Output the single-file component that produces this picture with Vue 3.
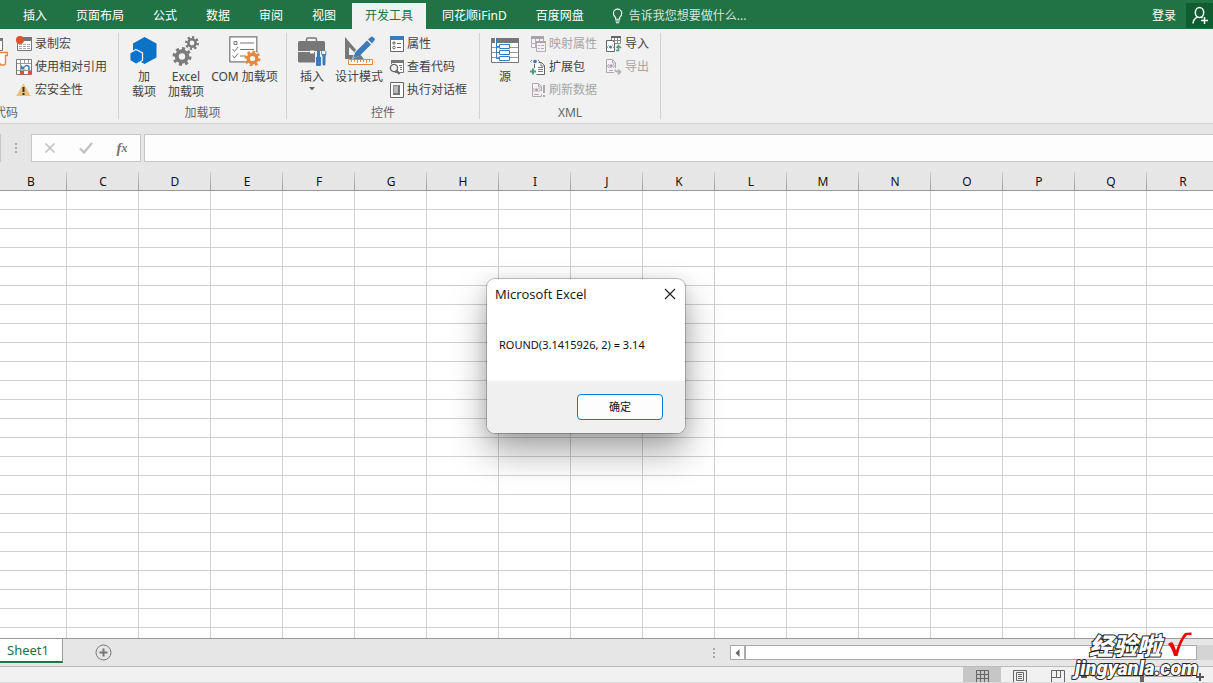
<script setup>
import { ref } from 'vue'

const tabs = ['插入', '页面布局', '公式', '数据', '审阅', '视图', '开发工具', '同花顺iFinD', '百度网盘']
const activeTab = ref('开发工具')
const columns = 'BCDEFGHIJKLMNOPQR'.split('')
const rowCount = 24
const formula = ref('')
const zoom = ref(50)
</script>

<template>
  <div class="app">
    <header class="tabbar">
      <nav class="tabs">
        <button v-for="t in tabs" :key="t" class="tab" :class="{ active: t === activeTab }" @click="activeTab = t">{{ t }}</button>
      </nav>
      <button class="tell">
        <svg width="12" height="16" viewBox="0 0 12 16" fill="none" stroke="#fff" stroke-width="1.1">
          <path d="M3.6 11.2V9.6C2.2 8.4 1.4 7 1.4 5.3a4.2 4.2 0 0 1 8.4 0c0 1.700-.8 3.100-2.200 4.300v1.600z" />
          <path d="M3.400 13h4.400M4 14.800h3.200" />
        </svg>
        <span>告诉我您想要做什么...</span>
      </button>
      <button class="login">登录</button>
      <button class="share" aria-label="共享">
        <svg width="18" height="20" viewBox="0 0 18 20" fill="none" stroke="#fff" stroke-width="1.5">
          <ellipse cx="8.500" cy="6.500" rx="4.200" ry="5" />
          <path d="M2 17.500c.3-3.500 1.800-5.500 4.700-6.400M10 11l1.500 1M10 14.500h7M13.500 11v7" />
        </svg>
      </button>
    </header>

    <section class="ribbon">
      <div class="group g-code">
        <div class="body">
          <svg class="macro" width="8" height="30" viewBox="0 0 8 30">
            <path d="M0 1.500h2.500v12H0" fill="#fff" stroke="#777" />
            <path d="M0 1h3v3H0z" fill="#777" />
            <path d="M0 15.500h7.500v3H5.500v7.500q0 2-2 2H1.500q-1.500 0-1.500-2" fill="#fff" stroke="#e8873a" stroke-width="1.400" />
          </svg>
          <div class="stack">
            <button class="small">
              <svg width="16" height="16" viewBox="0 0 16 16">
                <path d="M1.500 3.500h14v11h-14z" fill="#fff" stroke="#777" />
                <path d="M6 1h10v4H6z" fill="#777" />
                <path d="M3 8.500h11M3 10.500h11M3 12.500h11" stroke="#aaa" stroke-dasharray="3 1" />
                <circle cx="4" cy="4" r="4" fill="#d9532c" />
              </svg>录制宏</button>
            <button class="small">
              <svg width="16" height="16" viewBox="0 0 16 16">
                <path d="M.5.500h15v15H.5z" fill="#fff" stroke="#777" />
                <path d="M1 4.500h14M1 11.500h14M4.500 1v14M8.500 1v3M12.500 1v3" stroke="#999" />
                <path d="M4 12h4v3.500H4zM12 12h3v3.500h-3z" fill="#d9532c" />
                <path d="M5 5h10v6H5z" fill="#fff" />
                <path d="M7 9q3-4 6-1.500V11" fill="none" stroke="#3d7ab8" stroke-width="1.500" />
                <path d="M5 6v4.500h4.500z" fill="#3d7ab8" />
              </svg>使用相对引用</button>
            <button class="small">
              <svg width="16" height="16" viewBox="0 0 16 16">
                <path d="M7.500 1.500 14.800 14H.2z" fill="#ebc07c" />
                <path d="M7.500 5v5M7.500 11v2" stroke="#333" stroke-width="2" />
              </svg>宏安全性</button>
          </div>
        </div>
        <div class="caption">代码</div>
      </div>

      <div class="group g-addins">
        <div class="body">
          <button class="big w38">
            <svg width="28" height="30" viewBox="0 0 28 30">
              <path d="M14.500 1 26.500 7.500V21.500L14.500 28 3 21.500V7.500z" fill="#0a72c7" />
              <path d="M6 13.500 12.500 17v7.500L6 28.300-.2 24.500V17z" fill="#0a72c7" stroke="#f0f0f0" stroke-width="1.300" />
            </svg>
            <span>加<br>载项</span>
          </button>
          <button class="big w42">
            <svg width="28" height="30" viewBox="0 0 28 30" fill="none" stroke="#7b7b7b">
              <circle cx="10" cy="20.500" r="5.200" stroke-width="4" />
              <circle cx="10" cy="20.500" r="8" stroke-width="3" pathLength="16" stroke-dasharray="1 1" />
              <circle cx="20" cy="7" r="3.700" stroke-width="2.600" />
              <circle cx="20" cy="7" r="5.800" stroke-width="2.400" pathLength="16" stroke-dasharray="1 1" />
            </svg>
            <span>Excel<br>加载项</span>
          </button>
          <button class="big w71">
            <svg width="32" height="30" viewBox="0 0 32 30" fill="none">
              <path d="M.8.800h27v25H.8z" fill="#fff" stroke="#777" stroke-width="1.200" />
              <path d="M5 5.500h3v3H5zM11 7h14M11 13.500h14M11 20h6" stroke="#777" />
              <path d="m3.500 13 2 2.500 3.500-4.500M3.500 19.500l2 2.500 3.500-4.500" stroke="#777" />
              <circle cx="23.500" cy="22.500" r="7.500" fill="#f6f6f6" />
              <circle cx="23.500" cy="22.500" r="4.300" stroke="#e8873a" stroke-width="3.400" />
              <circle cx="23.500" cy="22.500" r="6.700" stroke="#e8873a" stroke-width="2.600" pathLength="16" stroke-dasharray="1 1" />
            </svg>
            <span>COM 加载项</span>
          </button>
        </div>
        <div class="caption">加载项</div>
      </div>

      <div class="group g-controls">
        <div class="body">
          <button class="big w34">
            <svg width="30" height="30" viewBox="0 0 30 30">
              <path d="M9.500 6V3.500q0-1.500 1.500-1.500h7q1.500 0 1.500 1.500V6" fill="none" stroke="#777" stroke-width="1.500" />
              <path d="M2.500 5h24q1.500 0 1.500 1.500V15H1V6.500Q1 5 2.500 5zM1 16h27v10.500H2.500Q1 26.500 1 25z" fill="#777" />
              <path d="M13 14.500h4v3h-4z" fill="#fff" />
              <path d="M18 15h12v15H18z" fill="#f0f0f0" />
              <path d="M20 15h3v6h1v8q0 1-1 1h-3q-1 0-1-1v-8h1zM25 14v4h3.500v-4q2 3 0 6v8q0 1.500-1.500 1.500t-1.500-1.500v-8q-2.500-3-.500-6z" fill="#3d7ab8" />
            </svg>
            <span>插入</span>
            <svg class="caret" width="6" height="4" viewBox="0 0 6 4"><path d="M0 0h6L3 3.500z" fill="#666" /></svg>
          </button>
          <button class="big w48">
            <svg width="32" height="30" viewBox="0 0 32 30">
              <path d="M2 1v22h19zM6 11l8 8H6z" fill="#777" fill-rule="evenodd" />
              <path d="M9 23 12 15 27 0l5 5L16 20z" fill="#f0f0f0" />
              <path d="m10 22 2.500-6L24 4.500 28 8.500 16.500 20zM25 3.500 28 .8q1-.8 2 .2l1.500 1.500q.8 1 0 1.700L29 7.500z" fill="#3d7ab8" />
              <path d="M5.500 23.500h24v5h-24z" fill="#fff" stroke="#e8873a" />
              <path d="M8.500 24v2M11.500 24v2M14.500 24v3M17.500 24v2M20.500 24v2M23.500 24v3M26.500 24v2" stroke="#e8873a" />
            </svg>
            <span>设计模式</span>
          </button>
          <div class="stack">
            <button class="small">
              <svg width="16" height="16" viewBox="0 0 16 16" fill="none" stroke="#666">
                <path d="M1.500.500h13v15h-13z" fill="#fff" />
                <path d="M1 0h14v4H1z" fill="#3d7ab8" stroke="none" />
                <path d="M4 6h2v2H4zM8 7.500h4M8 11.500h4" /><circle cx="5" cy="11.500" r="1.300" />
              </svg>属性</button>
            <button class="small">
              <svg width="16" height="16" viewBox="0 0 16 16" fill="none" stroke="#777">
                <path d="M2.500 1.500h12v12h-12z" fill="#fff" />
                <path d="M2 1h13v3H2z" fill="#777" stroke="none" />
                <path d="M10 6.500h3M11 8.500h2M11 10.500h2" />
                <path d="M0 5h6v10H0z" fill="#f0f0f0" stroke="none" />
                <circle cx="5" cy="9" r="3.600" fill="#f0f0f0" stroke="#666" stroke-width="1.400" />
                <path d="m7.500 11.500 3 3.500" stroke="#666" stroke-width="2" />
              </svg>查看代码</button>
            <button class="small">
              <svg width="16" height="16" viewBox="0 0 16 16" fill="none">
                <path d="M1.500.500h13v15h-13z" fill="#fff" stroke="#666" />
                <path d="M5 4h4v8H5z" fill="#bbb" /><path d="M9 3h2v10H4v-2h5z" fill="#777" />
                <path d="M4.500 3v9M4 3.500h6" stroke="#888" />
              </svg>执行对话框</button>
          </div>
        </div>
        <div class="caption">控件</div>
      </div>

      <div class="group g-xml">
        <div class="body">
          <button class="big w32">
            <svg width="30" height="28" viewBox="0 0 30 28" fill="none">
              <path d="M1.500 2.500h27v24h-27z" fill="#fff" stroke="#777" />
              <path d="M1 2h28v5H1z" fill="#777" />
              <path d="M2 11.500h26M2 16.500h26M2 21.500h26" stroke="#999" />
              <path d="M5 2h2v5H5z" fill="#fff" />
              <path d="M6.500 2v20.500h4M6 10.500h4M6 16.500h4" stroke="#3d7ab8" />
              <path d="M9.500 8.500h10v4h-10zM9.500 14.500h10v4h-10zM9.500 20.500h10v4h-10z" fill="#fff" stroke="#3d7ab8" />
            </svg>
            <span>源</span>
          </button>
          <div class="stack">
            <button class="small" disabled>
              <svg width="16" height="16" viewBox="0 0 16 16" fill="none" stroke="#b5adb5">
                <path d="M1.500.500h12v11h-12zM5.500 1v10M9.500 1v10M2 7.500h11" fill="#f7f0f7" />
                <path d="M1 0h13v3H1z" fill="#aaa4aa" stroke="none" />
                <path d="M6.500 5.500h9v10h-9z" fill="#f7f0f7" /><path d="M6 5h10v2H6z" fill="#aaa4aa" stroke="none" />
                <path d="M8 9.500h2M11 9.500h3M8 12.500h2M11 12.500h3" />
              </svg>映射属性</button>
            <button class="small">
              <svg width="16" height="16" viewBox="0 0 16 16" fill="none">
                <path d="M4.500 9V3.500h7l3 3v9h-8" fill="#fff" stroke="#666" />
                <path d="M11 3.500v3.500h3.500M8 8.500h5M8 10.500h5M8 12.500h5" stroke="#777" />
                <path d="M1 0h8v5H1z" fill="#f0f0f0" />
                <path d="M2 1 .5 2.500 2 4M8 1l1.500 1.500L8 4" stroke="#555" stroke-dasharray="1 1" />
                <circle cx="5" cy="2.500" r="1.800" fill="#3d7ab8" />
                <path d="M0 12.500h6M3 9.500v6" stroke="#4f9c7c" stroke-width="2" />
              </svg>扩展包</button>
            <button class="small" disabled>
              <svg width="16" height="16" viewBox="0 0 16 16" fill="none" stroke="#b0a8b0">
                <path d="M11.500 12.500v2h-9v-13h6l3 3V9M8.500 2v3h3" fill="#f7f0f7" />
                <path d="m4.500 6-2 2 2 2M8.500 6l2 2-2 2M4 12.500h5" /><circle cx="6.500" cy="8" r="1.300" fill="#aaa" />
                <path d="M14 3v8M14 13v2" stroke-width="2" />
              </svg>刷新数据</button>
          </div>
          <div class="stack">
            <button class="small">
              <svg width="16" height="16" viewBox="0 0 16 16" fill="none">
                <path d="M5.500.500h9v7h-9zM8.500 1v7M11.500 1v7M6 4.500h9" fill="#fff" stroke="#888" />
                <path d="M5 0h10v2H5z" fill="#666" />
                <path d="M.5 4.500h6l2 2v9h-8z" fill="#fff" stroke="#666" />
                <path d="M2.500 9.500 1 11l1.500 1.500M6.500 9.500 8 11l-1.500 1.500" stroke="#666" stroke-dasharray="1 1" />
                <circle cx="4.500" cy="11" r="1.500" fill="#3d7ab8" />
                <path d="M10 14.500h2.500V10M10.500 12l2-2.500 2.500 2.500" stroke="#4f9c7c" stroke-width="1.500" />
              </svg>导入</button>
            <button class="small" disabled>
              <svg width="16" height="16" viewBox="0 0 16 16" fill="none" stroke="#b0a8b0">
                <path d="M8 13.500H.5V.500h6l3 3V9M6.500 1v3h3" fill="#f7f0f7" />
                <path d="m3 5-1.500 2L3 9M7 5l1.500 2L7 9M3 11.500h4" /><circle cx="5" cy="7" r="1.300" fill="#aaa" />
                <path d="M9 10.500q0 2.500 5 2.500M12 10.500l2.500 2.500-2.500 2.500" stroke-width="1.500" />
              </svg>导出</button>
          </div>
        </div>
        <div class="caption">XML</div>
      </div>
    </section>

    <section class="formula-bar">
      <div class="namebox"></div>
      <div class="dots"><i></i><i></i><i></i></div>
      <div class="fx-box">
        <button aria-label="取消"><svg width="12" height="12" viewBox="0 0 12 12"><path d="m1.500 1.500 9 9M10.500 1.500l-9 9" stroke="#c2c2c2" stroke-width="1.700" /></svg></button>
        <button aria-label="输入"><svg width="14" height="12" viewBox="0 0 14 12"><path d="m1 6.500 4 4L13 1" fill="none" stroke="#c2c2c2" stroke-width="2.400" /></svg></button>
        <button class="fx">f<small>x</small></button>
      </div>
      <input v-model="formula" class="formula" aria-label="编辑栏">
    </section>

    <main class="sheet">
      <table>
        <thead>
          <tr><th v-for="c in columns" :key="c" scope="col">{{ c }}</th></tr>
        </thead>
        <tbody>
          <tr v-for="r in rowCount" :key="r"><td v-for="c in columns" :key="c"></td></tr>
        </tbody>
      </table>
    </main>

    <section class="sheetbar">
      <button class="sheet-tab">Sheet1</button>
      <button class="add" aria-label="新工作表">
        <svg width="17" height="17" viewBox="0 0 17 17" fill="none" stroke="#777">
          <circle cx="8.500" cy="8.500" r="7.500" /><path d="M4.500 8.500h8M8.500 4.500v8" stroke-width="2" />
        </svg>
      </button>
      <div class="dots"><i></i><i></i><i></i></div>
      <div class="scroll">
        <button aria-label="向左滚动"><svg width="5" height="8" viewBox="0 0 5 8"><path d="M4.500 0v8L.5 4z" fill="#666" /></svg></button>
        <div class="thumb"></div>
      </div>
    </section>

    <footer class="status">
      <button class="view on" aria-label="普通">
        <svg width="13" height="13" viewBox="0 0 13 13" fill="none" stroke="#666"><path d="M.5.500h12v12H.5zM4.500 0v13M8.500 0v13M0 4.500h13M0 8.500h13" /></svg>
      </button>
      <button class="view" aria-label="页面布局视图">
        <svg width="14" height="13" viewBox="0 0 14 13" fill="none" stroke="#666"><path d="M.5.500h13v12H.5zM3.500 2.500h7v8h-7zM5 4.500h4M5 6.500h4M5 8.500h4" /></svg>
      </button>
      <button class="view" aria-label="分页预览">
        <svg width="14" height="13" viewBox="0 0 14 13" fill="none" stroke="#666"><path d="M.5.500h13v12H.5zM5.500 0v7.500M9.500 0v7.500M0 7.500h10" /></svg>
      </button>
      <button class="zoom" aria-label="缩小"><svg width="8" height="8" viewBox="0 0 8 8"><path d="M1 4h6" stroke="#555" stroke-width="2" /></svg></button>
      <input v-model="zoom" class="slider" type="range" aria-label="缩放">
      <button class="zoom" aria-label="放大"><svg width="8" height="8" viewBox="0 0 8 8"><path d="M0 4h8M4 0v8" stroke="#555" stroke-width="2" /></svg></button>
    </footer>

    <div class="dialog" role="dialog" aria-label="Microsoft Excel">
      <div class="title">
        <span>Microsoft Excel</span>
        <button class="close" aria-label="关闭"><svg width="12" height="12" viewBox="0 0 12 12"><path d="m1 1 10 10M11 1 1 11" stroke="#222" stroke-width="1.200" /></svg></button>
      </div>
      <p>ROUND(3.1415926, 2) = 3.14</p>
      <div class="actions"><button class="ok">确定</button></div>
    </div>

    <div class="mark">
      <div class="mark-top">
        <span>经验啦</span>
        <svg width="26" height="26" viewBox="0 0 26 26"><path d="M1 12q3-2.500 4.500-1.500 1.500 2 3.500 8Q13 7 17.500 1.500 19 .5 24.500.500V3H20Q14 9 10.500 24H7Q5 16 1 12z" fill="#f00000" /></svg>
      </div>
      <div class="mark-url">jingyanla.com</div>
    </div>
  </div>
</template>

<style>
body { margin: 0; overflow: hidden; }
</style>

<style scoped>
.app {
  position: relative;
  display: flex;
  flex-direction: column;
  height: 100vh;
  overflow: hidden;
  background: #e6e6e6;
  color: #444;
  font: 12px/14px "Noto Sans", "Noto Sans CJK SC", sans-serif;
}
* { box-sizing: border-box; }
button { border: 0; padding: 0; background: none; color: inherit; font: inherit; white-space: nowrap; }
svg { display: block; flex: none; }

.tabbar { display: flex; height: 29px; flex: none; align-items: flex-end; background: #217346; color: #fff; }
.tabs { display: flex; gap: 3px; padding-left: 10px; }
.tab { height: 26px; padding: 0 13px 1px; }
.tab.active { background: #f1f1f1; color: #217346; }
.tell { display: flex; align-items: center; gap: 5px; height: 26px; margin-left: 15px; color: #d5e6dc; }
.login { height: 26px; margin-left: auto; padding: 0 10px 1px; }
.share { display: flex; align-items: center; width: 27px; height: 25px; margin-bottom: 1px; padding-left: 5px; background: #0e5c2f; }

.ribbon { display: flex; height: 95px; flex: none; background: #f1f1f1; border-bottom: 1px solid #d2d2d2; }
.group { flex: none; margin: 4px 0; border-right: 1px solid #d2d2d2; }
.g-code { width: 119px; }
.g-addins { width: 168px; }
.g-controls { width: 193px; }
.g-xml { width: 181px; }
.body { display: flex; height: 69px; }
.g-code .body { gap: 8px; }
.g-addins .body { gap: 2px; padding-left: 6px; }
.g-controls .body { gap: 6px; padding-left: 8px; }
.g-xml .body { gap: 9px; padding-left: 9px; }
.stack { margin-top: -1px; }
.macro { margin-top: 4px; }
.caption { padding-top: 4px; text-align: center; color: #666; line-height: 14px; }
.g-code .caption { width: 24px; margin-left: -6px; }
.small { display: flex; align-items: center; gap: 2px; height: 23px; }
.g-code .small { gap: 3px; }
.g-xml .small { gap: 3px; }
.small:disabled { color: #a6a6a6; }
.big { display: flex; flex-direction: column; align-items: center; padding-top: 3px; gap: 3px; }
.big span { line-height: 15px; }
.g-xml .big { gap: 5px; }
.w32 { width: 32px; }
.w34 { width: 34px; }
.w38 { width: 38px; }
.w42 { width: 42px; }
.w48 { width: 48px; }
.w71 { width: 71px; }

.formula-bar { display: flex; align-items: center; height: 45px; flex: none; padding: 10px 0 7px; }
.namebox { width: 1px; height: 28px; background: #c6c6c6; }
.dots { display: flex; flex-direction: column; gap: 2px; }
.dots i { width: 2px; height: 2px; background: #aaa; }
.formula-bar .dots { margin: 0 14px; }
.fx-box { display: flex; width: 110px; height: 28px; align-items: center; background: #fdfdfd; border: 1px solid #c6c6c6; }
.fx-box button { display: flex; flex: 1; align-items: center; justify-content: center; }
.fx-box .fx { font: italic bold 15px/20px "Liberation Serif", serif; color: #777; }
.fx small { font-size: 12px; }
.formula { flex: 1; min-width: 0; height: 28px; margin-left: 3px; padding: 0 6px; border: 1px solid #c6c6c6; border-right: 0; border-radius: 0; background: #fdfdfd; font: inherit; outline: 0; }

.sheet { flex: 1; min-height: 0; overflow: hidden; background: #fff; }
table { width: calc(100% + 11px); margin-left: -5px; table-layout: fixed; border-collapse: separate; border-spacing: 0; }
th { height: 22px; padding: 5px 0 0; border-bottom: 1px solid #999; background: linear-gradient(#d0d0d0, #999) right bottom / 1px 18px no-repeat #e6e6e6; color: #111; font-weight: 400; line-height: 16px; }
td { height: 19px; padding: 0; border-right: 1px solid #d0d0d0; border-bottom: 1px solid #d0d0d0; }

.sheetbar { display: flex; height: 29px; flex: none; align-items: center; border-top: 1px solid #999; border-bottom: 1px solid #bbb; }
.sheet-tab { align-self: flex-start; width: 63px; height: 24px; padding-right: 6px; background: #fff; border-right: 1px solid #999; border-bottom: 2px solid #217346; color: #217346; font-size: 13px; text-align: center; }
.add { margin-left: 32px; }
.sheetbar .dots { margin: 0 15px 0 auto; }
.scroll { display: flex; width: 483px; height: 15px; border-right: 16px solid #d4d4d4; }
.scroll button { display: flex; align-items: center; justify-content: center; width: 15px; border: 1px solid #aaa; background: #fff; }
.thumb { flex: 1; border: 1px solid #aaa; background: #fff; }

.status { display: flex; height: 16px; flex: none; justify-content: flex-end; overflow: hidden; background: #f1f1f1; border-bottom: 1px solid #d8d8d8; padding-right: 9px; }
.view { display: flex; justify-content: center; width: 38px; padding-top: 3px; }
.view.on { background: #c6c6c6; }
.zoom { display: flex; align-items: center; padding-top: 4px; }
.view + .zoom { margin-left: 3px; }
.slider { width: 100px; height: 13px; margin: 3px 4px 0; appearance: none; background: linear-gradient(#aaa, #aaa) center / 100% 1px no-repeat; }
.slider::-webkit-slider-thumb { appearance: none; width: 4px; height: 12px; background: #666; }

.dialog { position: absolute; left: 487px; top: 279px; width: 198px; border-radius: 8px; overflow: hidden; background: #fff; color: #111; box-shadow: 0 0 0 1px rgba(0, 0, 0, .22), 0 18px 36px rgba(0, 0, 0, .36), 0 2px 16px rgba(0, 0, 0, .1); }
.title { display: flex; align-items: center; justify-content: space-between; height: 29px; padding: 0 9px 0 8px; font-family: "Open Sans", sans-serif; font-size: 13px; }
.dialog p { margin: 0; padding: 29px 12px 28px; font-size: 11px; line-height: 16px; white-space: nowrap; }
.actions { display: flex; justify-content: flex-end; padding: 13px 22px; background: #f0f0f0; }
.ok { width: 86px; height: 26px; border: 1px solid #0078d4; border-radius: 4px; background: #fdfdfd; font-size: 11px; }

.mark { position: absolute; right: 15px; bottom: 5px; display: flex; flex-direction: column; align-items: flex-end; color: #fff; font-style: italic; font-weight: 900; -webkit-text-stroke: 2px #222; paint-order: stroke fill; }
.mark-top { display: flex; align-items: center; gap: 6px; padding-right: 5px; font-family: "Noto Sans CJK SC", sans-serif; font-size: 24px; line-height: 24px; }
.mark-url { font-family: Roboto, "Liberation Sans", sans-serif; font-size: 20px; line-height: 20px; }
</style>
